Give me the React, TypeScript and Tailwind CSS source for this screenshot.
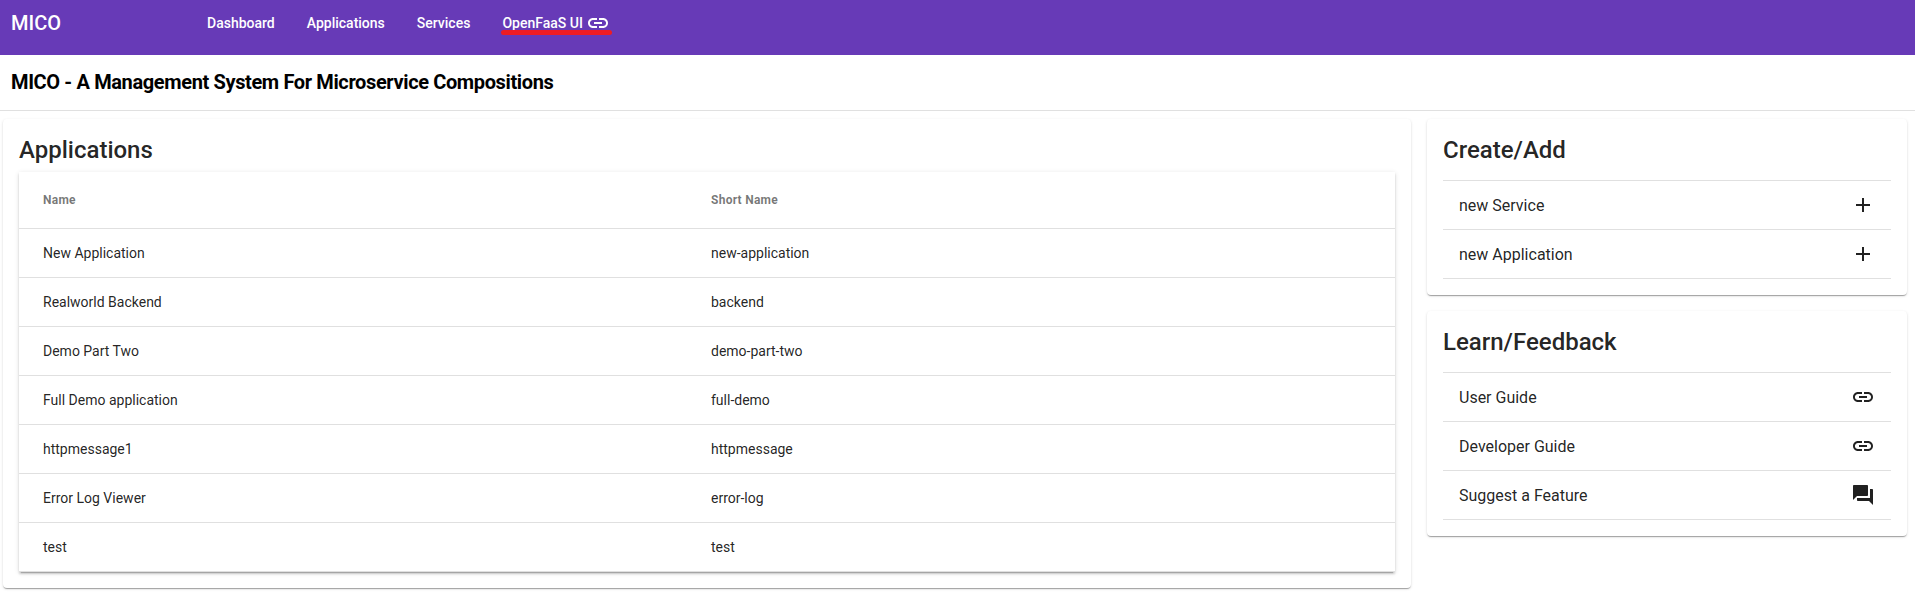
import type { ReactNode } from "react";
import { MdAdd, MdLink, MdQuestionAnswer } from "react-icons/md";

const applications = [
  ["New Application", "new-application"],
  ["Realworld Backend", "backend"],
  ["Demo Part Two", "demo-part-two"],
  ["Full Demo application", "full-demo"],
  ["httpmessage1", "httpmessage"],
  ["Error Log Viewer", "error-log"],
  ["test", "test"],
];

const cardShadow =
  "shadow-[0_2px_1px_-1px_rgba(0,0,0,0.2),0_1px_1px_0_rgba(0,0,0,0.14),0_1px_3px_0_rgba(0,0,0,0.12)]";
const tableShadow =
  "shadow-[0_3px_1px_-2px_rgba(0,0,0,0.2),0_2px_2px_0_rgba(0,0,0,0.14),0_1px_5px_0_rgba(0,0,0,0.12)]";

function Card({ title, children }: { title: string; children: ReactNode }) {
  return (
    <section className={`rounded bg-white p-4 ${cardShadow}`}>
      <h2 className="text-2xl leading-[30px] font-medium">{title}</h2>
      {children}
    </section>
  );
}

function ActionList({ items }: { items: { label: string; icon: ReactNode }[] }) {
  return (
    <ul className="mt-[15px] border-t border-black/12 text-base">
      {items.map((item) => (
        <li key={item.label} className="flex h-[49px] items-center justify-between border-b border-black/12 px-4">
          <span className="pt-0.5">{item.label}</span>
          {item.icon}
        </li>
      ))}
    </ul>
  );
}

export default function App() {
  return (
    <div className="h-[609px] overflow-hidden bg-white font-[Roboto,sans-serif] text-black/87">
      <header className="flex h-[55px] bg-[#673ab7] pl-[11px] font-medium text-white">
        <div className="w-[196px] text-xl leading-[46px]">MICO</div>
        <nav className="flex gap-8 text-sm leading-[46px]">
          <a>Dashboard</a>
          <a>Applications</a>
          <a>Services</a>
          <a className="relative flex items-center self-start">
            OpenFaaS UI
            <MdLink className="ml-[3px] size-6" />
            <span className="absolute top-[30px] -left-px h-[5px] w-[111px] rounded-full bg-[#ed1c24]" />
          </a>
        </nav>
      </header>
      <div className="h-14 border-b border-black/12 pl-[11px]">
        <h1 className="text-xl leading-[55px] font-bold tracking-[-0.37px] text-black">
          MICO - A Management System For Microservice Compositions
        </h1>
      </div>
      <main className="grid grid-cols-[1408px_1fr] items-start gap-4 pt-2 pr-2 pl-[3px]">
        <Card title="Applications">
          <div className={`mt-[7px] ${tableShadow}`}>
            <div className="flex h-[57px] items-center border-b border-black/12 px-6 text-xs font-bold tracking-[0.26px] text-black/54">
              <div className="w-[668px]">Name</div>
              <div>Short Name</div>
            </div>
            {applications.map(([name, shortName]) => (
              <div key={name} className="flex h-[49px] items-center border-b border-black/12 px-6 text-sm">
                <div className="w-[668px]">{name}</div>
                <div>{shortName}</div>
              </div>
            ))}
          </div>
        </Card>
        <div className="flex flex-col gap-4">
          <Card title="Create/Add">
            <ActionList
              items={[
                { label: "new Service", icon: <MdAdd className="size-6" /> },
                { label: "new Application", icon: <MdAdd className="size-6" /> },
              ]}
            />
          </Card>
          <Card title="Learn/Feedback">
            <ActionList
              items={[
                { label: "User Guide", icon: <MdLink className="size-6" /> },
                { label: "Developer Guide", icon: <MdLink className="size-6" /> },
                { label: "Suggest a Feature", icon: <MdQuestionAnswer className="size-6" /> },
              ]}
            />
          </Card>
        </div>
      </main>
    </div>
  );
}
